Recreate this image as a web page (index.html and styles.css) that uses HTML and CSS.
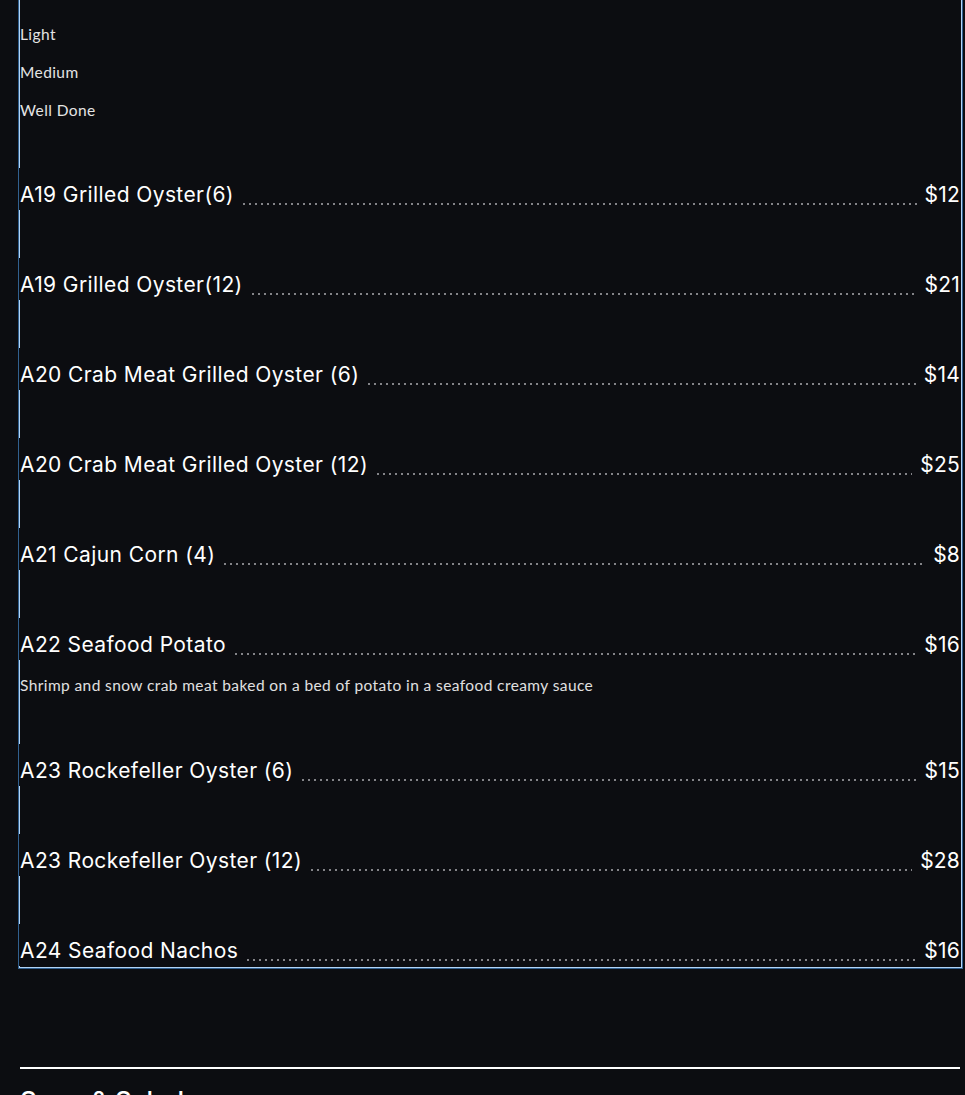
FILE: index.html
```html
<!DOCTYPE html>
<html lang="en">
<head>
    <meta charset="UTF-8">
    <meta name="viewport" content="width=device-width, initial-scale=1.0">
    <title>Appetizers</title>
    <link rel="stylesheet" href="styles.css">
</head>
<body>
    <main>
        <!-- Appetizer section -->
        <section class="menu-box">
            <ul class="options">
                <li>Light</li>
                <li>Medium</li>
                <li>Well Done</li>
            </ul>

            <div class="item"><span class="name">A19 Grilled Oyster(6)</span><span class="dots"></span><span class="price">$12</span></div>
            <div class="item"><span class="name">A19 Grilled Oyster(12)</span><span class="dots"></span><span class="price">$21</span></div>
            <div class="item"><span class="name">A20 Crab Meat Grilled Oyster (6)</span><span class="dots"></span><span class="price">$14</span></div>
            <div class="item"><span class="name">A20 Crab Meat Grilled Oyster (12)</span><span class="dots"></span><span class="price">$25</span></div>
            <div class="item"><span class="name">A21 Cajun Corn (4)</span><span class="dots"></span><span class="price">$8</span></div>
            <div class="item has-desc"><span class="name">A22 Seafood Potato</span><span class="dots"></span><span class="price">$16</span></div>
            <p class="desc">Shrimp and snow crab meat baked on a bed of potato in a seafood creamy sauce</p>
            <div class="item"><span class="name">A23 Rockefeller Oyster (6)</span><span class="dots"></span><span class="price">$15</span></div>
            <div class="item"><span class="name">A23 Rockefeller Oyster (12)</span><span class="dots"></span><span class="price">$28</span></div>
            <div class="item last"><span class="name">A24 Seafood Nachos</span><span class="dots"></span><span class="price">$16</span></div>
        </section>

        <hr class="divider">
        <h2 class="section-title">Soup &amp; Salad</h2>
    </main>
</body>
</html>
```

FILE: styles.css
```css
/* Global Styles */
body {
    margin: 0;
    padding: 0;
    background: #0c0d11;
    color: #fff;
    font-family: 'Inter', 'Noto Sans', sans-serif;
    overflow: hidden;
}

main {
    padding: 0 0 40px;
}

/* Menu Box */
.menu-box {
    margin: -2px 3px 0 19px;
    padding: 0 1px 1px 0;
    border: 1px solid #b2d4f6;
    box-shadow: 0 0 0 1px #31608f;
}

.options {
    list-style: none;
    margin: 0;
    padding: 16px 0 0;
}

.options li {
    font-family: 'Lato', 'Noto Sans', sans-serif;
    font-size: 15.5px;
    letter-spacing: 0.4px;
    line-height: 38px;
    color: #e4e4e4;
}

/* Menu Items */
.item {
    display: flex;
    align-items: baseline;
    margin: 39px 0 0 -1px;
    padding: 12px 0 0 1px;
    background: #0c0d11;
    line-height: 30px;
    font-size: 21px;
    font-weight: 400;
    letter-spacing: 0.4px;
}

.item + .item,
.desc + .item {
    margin-top: 48px;
}

.name {
    white-space: nowrap;
}

.dots {
    flex: 1;
    height: 2px;
    margin: 0 8px 0 7px;
    background-image: radial-gradient(circle, #86868b 0.7px, transparent 1.1px);
    background-size: 6px 2px;
    background-repeat: repeat-x;
    position: relative;
    top: 3px;
}

.price {
    white-space: nowrap;
    letter-spacing: 0.2px;
}

.desc {
    margin: 14px 0 0;
    font-family: 'Lato', 'Noto Sans', sans-serif;
    font-size: 15.5px;
    letter-spacing: 0.4px;
    line-height: 22px;
    color: #e0e0e0;
}

/* Next section */
.divider {
    margin: 99px 5px 0 20px;
    border: none;
    height: 2px;
    background: #fff;
}

.section-title {
    margin: 16px 0 0 20px;
    font-size: 26px;
    font-weight: 500;
}
```
